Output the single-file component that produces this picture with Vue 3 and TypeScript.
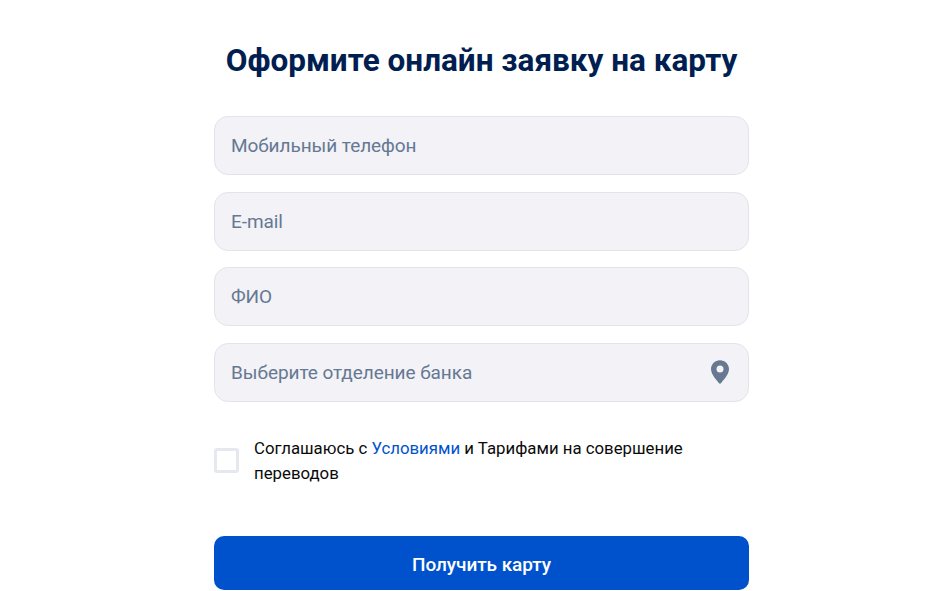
<script setup lang="ts">
const fields: { label: string; pin?: boolean }[] = [
  { label: 'Мобильный телефон' },
  { label: 'E-mail' },
  { label: 'ФИО' },
  { label: 'Выберите отделение банка', pin: true },
]
</script>

<template>
  <main class="page">
    <section class="form">
      <h1 class="title">Оформите онлайн заявку на карту</h1>
      <div class="fields">
        <div v-for="f in fields" :key="f.label" class="field">
          <span>{{ f.label }}</span>
          <svg v-if="f.pin" class="pin" width="20" height="24" viewBox="0 0 20 24">
            <path
              fill-rule="evenodd"
              fill="#667892"
              d="M10 .2C5 .2 1 4.100 1 9.100c0 5.500 6 11.600 8 14.100.5.6 1.500.6 2 0 2-2.500 8-8.600 8-14.100C19 4.100 15 .2 10 .2ZM10 5.400a3.500 3.500 0 1 1 0 7 3.500 3.500 0 0 1 0-7Z"
            />
          </svg>
        </div>
      </div>
      <div class="agree">
        <span class="box"></span>
        <p>Соглашаюсь с <a>Условиями</a> и Тарифами на совершение переводов</p>
      </div>
      <button class="submit" type="button">Получить карту</button>
    </section>
  </main>
</template>

<style>
html, body { margin: 0; background: #fff; overflow: hidden; }
</style>

<style scoped>
.page {
  height: 591px;
  overflow: hidden;
  display: flex;
  justify-content: center;
  font-family: Roboto, "Liberation Sans", sans-serif;
}
.form {
  width: 535px;
  margin-left: 22px;
  padding-top: 41px;
  display: flex;
  flex-direction: column;
}
.title {
  margin: 0 0 36px;
  font-size: 31.5px;
  line-height: 39px;
  font-weight: 700;
  color: #001e50;
  text-align: center;
  white-space: nowrap;
}
.fields {
  display: flex;
  flex-direction: column;
  gap: 16.5px;
}
.field {
  box-sizing: border-box;
  height: 59px;
  padding: 0 18px 0 16px;
  display: flex;
  align-items: center;
  justify-content: space-between;
  background: #f2f2f7;
  border: 1px solid #e3e3ec;
  border-radius: 14px;
  font-size: 19px;
  letter-spacing: -0.06px;
  color: #667892;
}
.agree {
  margin-top: 34px;
  display: flex;
  align-items: center;
  gap: 15px;
}
.box {
  flex: none;
  box-sizing: border-box;
  width: 25px;
  height: 25px;
  border: 3px solid #e6e8ef;
  border-radius: 3px;
}
.agree p {
  margin: 0;
  font-size: 16.8px;
  line-height: 25px;
  color: #0a0a0a;
}
.agree a {
  color: #0052cc;
}
.submit {
  margin-top: 50px;
  height: 54px;
  padding: 4px 0 0;
  flex: none;
  border: 0;
  border-radius: 10px;
  background: #0052cc;
  color: #fff;
  font: 500 19px Roboto, "Liberation Sans", sans-serif;
  letter-spacing: -0.06px;
}
</style>
